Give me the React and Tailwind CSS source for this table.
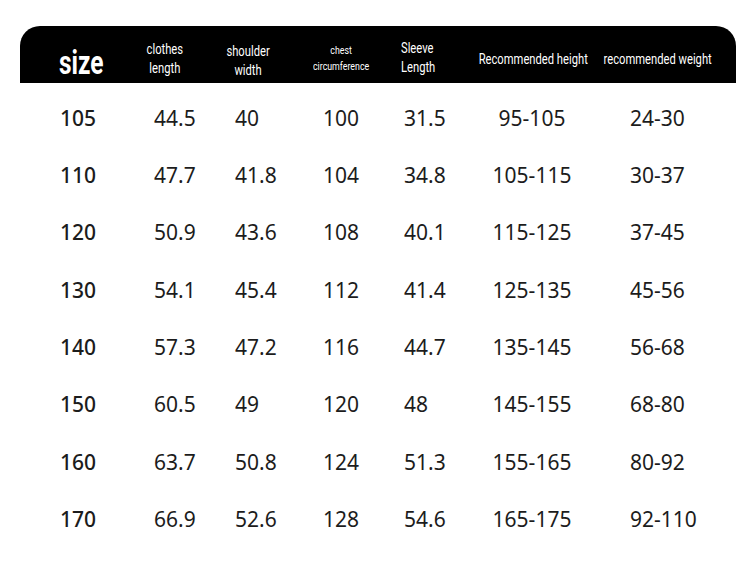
import React from 'react';

const rows = [
  ['105', '44.5', '40', '100', '31.5', '95-105', '24-30'],
  ['110', '47.7', '41.8', '104', '34.8', '105-115', '30-37'],
  ['120', '50.9', '43.6', '108', '40.1', '115-125', '37-45'],
  ['130', '54.1', '45.4', '112', '41.4', '125-135', '45-56'],
  ['140', '57.3', '47.2', '116', '44.7', '135-145', '56-68'],
  ['150', '60.5', '49', '120', '48', '145-155', '68-80'],
  ['160', '63.7', '50.8', '124', '51.3', '155-165', '80-92'],
  ['170', '66.9', '52.6', '128', '54.6', '165-175', '92-110'],
];

const cond = { fontFamily: 'Roboto, "Liberation Sans", sans-serif' };

export default function App() {
  return (
    <div className="w-[756px] h-[567px] bg-white pt-[26px] pl-[20px]" style={{ fontFamily: '"Noto Sans", "Open Sans", sans-serif' }}>
      {/* Header bar */}
      <div className="flex w-[716px] h-[57px] pt-[9px] bg-black rounded-t-[20px] text-white items-center" style={cond}>
        <div className="w-[110px] pl-[39px] pt-[8px]">
          <span className="inline-block origin-left scale-x-[0.72] text-[34px] font-bold leading-none">size</span>
        </div>
        <div className="w-[70px] flex justify-center">
          <div className="text-center text-[14px] leading-[19px] scale-x-[0.8] whitespace-nowrap">clothes<br />length</div>
        </div>
        <div className="w-[96px] flex justify-center pt-[3px]">
          <div className="text-center text-[14px] leading-[19px] scale-x-[0.8] whitespace-nowrap">shoulder<br />width</div>
        </div>
        <div className="w-[90px] flex justify-center">
          <div className="text-center text-[11px] leading-[16px] scale-x-[0.8] whitespace-nowrap">chest<br />circumference</div>
        </div>
        <div className="w-[84px] pl-[15px]">
          <div className="inline-block origin-left text-left text-[14px] leading-[19px] scale-x-[0.8]">Sleeve<br />Length</div>
        </div>
        <div className="w-[126px] flex justify-center">
          <div className="text-[14px] whitespace-nowrap scale-x-[0.8]">Recommended height</div>
        </div>
        <div className="w-[124px] flex justify-center">
          <div className="text-[14px] whitespace-nowrap scale-x-[0.8]">recommended weight</div>
        </div>
      </div>

      {/* Data rows */}
      <div className="pt-[7px] text-[21px] text-[#1c1c1c]">
        {rows.map((r) => (
          <div key={r[0]} className="flex items-center h-[57.3px]">
            <div className="w-[134px] pl-[40px] font-medium">{r[0]}</div>
            <div className="w-[81px]">{r[1]}</div>
            <div className="w-[71px]">{r[2]}</div>
            <div className="w-[70px] text-center">{r[3]}</div>
            <div className="w-[90px] pl-[28px]">{r[4]}</div>
            <div className="w-[132px] text-center">{r[5]}</div>
            <div className="w-[138px] pl-[32px]">{r[6]}</div>
          </div>
        ))}
      </div>
    </div>
  );
}
